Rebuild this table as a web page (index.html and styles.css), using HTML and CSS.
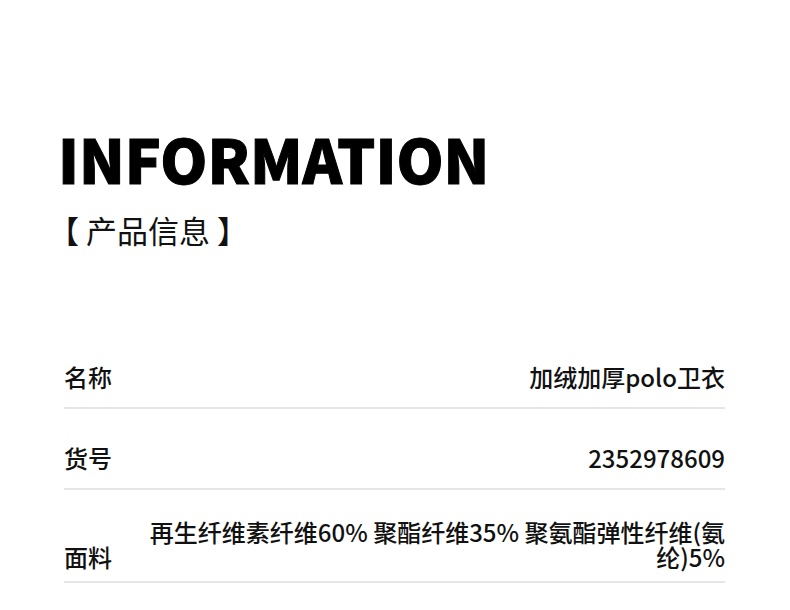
FILE: index.html
```html
<!DOCTYPE html>
<html lang="zh-CN">
<head>
<meta charset="utf-8">
<title>INFORMATION</title>
<link rel="stylesheet" href="styles.css">
</head>
<body>
<main class="page">
  <header class="intro">
    <h1 class="title">INFORMATION</h1>
    <p class="subtitle">【 产品信息 】</p>
  </header>
  <section class="specs">
    <div class="row">
      <span class="label">名称</span>
      <span class="value">加绒加厚polo卫衣</span>
    </div>
    <div class="row">
      <span class="label">货号</span>
      <span class="value">2352978609</span>
    </div>
    <div class="row row-multi">
      <span class="label">面料</span>
      <span class="value">再生纤维素纤维60% 聚酯纤维35% 聚氨酯弹性纤维(氨纶)5%</span>
    </div>
  </section>
</main>
</body>
</html>
```

FILE: styles.css
```css
html, body {
  margin: 0;
  padding: 0;
  background: #ffffff;
}

body {
  font-family: "Noto Sans CJK SC", "Noto Sans", sans-serif;
  color: #111111;
  width: 790px;
  height: 610px;
  overflow: hidden;
}

.page {
  padding: 0 65px 0 64px;
}

.intro {
  padding-top: 128px;
}

.title {
  margin: 0 0 0 -6px;
  font-size: 60px;
  font-weight: 900;
  line-height: 60px;
  color: #000000;
  -webkit-text-stroke: 1px #000000;
}

.subtitle {
  margin: 26px 0 0 -16px;
  font-size: 31px;
  line-height: 31px;
  font-weight: 400;
  color: #111111;
}

.specs {
  margin-top: 83px;
}

.row {
  display: flex;
  justify-content: space-between;
  align-items: center;
  min-height: 38px;
  padding: 29px 0 12px;
  border-bottom: 2px solid #e6e6e6;
  font-size: 24px;
  line-height: 25px;
  font-weight: 500;
}

.label {
  flex: none;
}

.row-multi .label {
  align-self: flex-end;
}

.value {
  max-width: 585px;
  text-align: right;
}
```
